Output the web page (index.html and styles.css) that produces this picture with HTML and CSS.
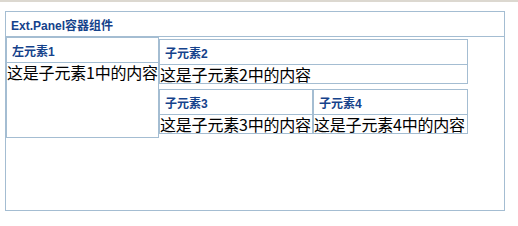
FILE: index.html
```html
<!DOCTYPE html>
<html lang="zh-CN">
<head>
    <meta charset="UTF-8">
    <title>Ext.Panel容器组件</title>
    <link rel="stylesheet" href="styles.css">
</head>
<body>
    <div class="top-strip"></div>

    <!-- 外层容器 -->
    <div class="panel">
        <div class="panel-header">Ext.Panel容器组件</div>
        <div class="panel-body">
            <div class="child child-left">
                <div class="child-header">左元素1</div>
                <div class="child-body">这是子元素1中的内容</div>
            </div>
            <div class="right-column">
                <div class="child child-2">
                    <div class="child-header">子元素2</div>
                    <div class="child-body">这是子元素2中的内容</div>
                </div>
                <div class="child-row">
                    <div class="child child-3">
                        <div class="child-header">子元素3</div>
                        <div class="child-body">这是子元素3中的内容</div>
                    </div>
                    <div class="child child-4">
                        <div class="child-header">子元素4</div>
                        <div class="child-body">这是子元素4中的内容</div>
                    </div>
                </div>
            </div>
        </div>
    </div>
</body>
</html>
```

FILE: styles.css
```css
* {
    box-sizing: border-box;
    margin: 0;
    padding: 0;
}

body {
    background: #fff;
    font-family: 'Liberation Sans', 'Noto Sans CJK SC', sans-serif;
    color: #000;
}

.top-strip {
    height: 2px;
    background-color: #dcd8d0;
}

.panel {
    margin: 9px 0 0 5px;
    width: 500px;
    height: 200px;
    border: 1px solid #a4bdd2;
    display: flex;
    flex-direction: column;
}

.panel-header {
    height: 25px;
    border-bottom: 1px solid #a4bdd2;
    padding-left: 5px;
    display: flex;
    align-items: center;
    font-size: 12px;
    font-weight: bold;
    color: #15428b;
}

.panel-body {
    flex-grow: 1;
    display: flex;
    align-items: flex-start;
}

.child {
    border: 1px solid #a4bdd2;
}

.child-header {
    height: 25px;
    border-bottom: 1px solid #a4bdd2;
    padding-left: 5px;
    display: flex;
    align-items: center;
    font-size: 12px;
    font-weight: bold;
    color: #15428b;
}

.child-body {
    font-family: 'Noto Sans CJK SC', sans-serif;
    font-size: 16px;
    line-height: 18px;
    white-space: nowrap;
    letter-spacing: -0.2px;
}

.child-left {
    width: 154px;
    height: 101px;
    border-left-width: 2px;
    margin-left: -1px;
}

.right-column {
    width: 309px;
    padding-top: 2px;
}

.child-2 {
    height: 45px;
}

.child-row {
    display: flex;
    margin-top: 5px;
}

.child-3 {
    width: 154px;
    height: 45px;
}

.child-4 {
    width: 155px;
    height: 45px;
}
```
